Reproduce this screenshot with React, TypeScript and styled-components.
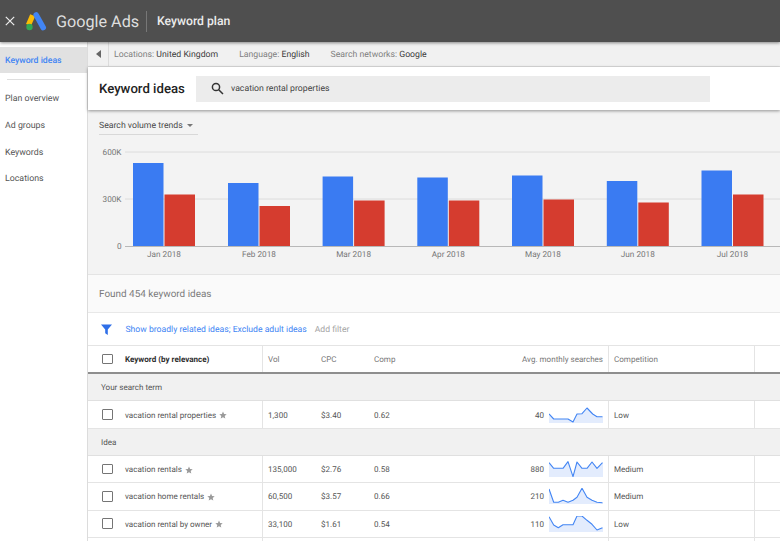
import React from "react";
import styled, { createGlobalStyle } from "styled-components";

const Global = createGlobalStyle`
  html, body { margin: 0; padding: 0; background: #fff; }
  body { font-family: Roboto, "Liberation Sans", sans-serif; overflow: hidden; text-rendering: geometricPrecision; }
  #root { width: 780px; height: 541px; overflow: hidden; }
  * { box-sizing: border-box; }
`;

const Page = styled.div`
  width: 780px;
  height: 541px;
  display: flex;
  flex-direction: column;
  overflow: hidden;
  background: #fff;
`;
const Header = styled.header`
  position: relative;
  z-index: 2;
  height: 42px;
  flex: none;
  display: flex;
  align-items: center;
  background: #4f4f4f;
  box-shadow: 0 1px 3px rgba(0, 0, 0, 0.45);
  color: #e8e8e8;
`;
const CloseButton = styled.div`
  width: 26px;
  padding-left: 5px;
  display: flex;
  align-items: center;
`;
const LogoBox = styled.div`
  width: 21px;
  margin-right: 9px;
  display: flex;
`;
const Brand = styled.div`
  font-size: 16.2px;
  color: #dedede;
  width: 90px;
`;
const HeaderDivider = styled.div`
  width: 1px;
  height: 21px;
  background: #777;
  margin-right: 10px;
`;
const PlanTitle = styled.div`
  font-size: 12.2px;
  font-weight: 500;
  color: #ececec;
`;
const Body = styled.div`
  flex: 1;
  min-height: 0;
  display: flex;
`;
const Sidebar = styled.nav`
  width: 88px;
  flex: none;
  background: #fff;
  border-right: 1px solid #dcdcdc;
  padding-top: 5px;
`;
const SideActive = styled.div`
  height: 26px;
  display: flex;
  align-items: center;
  padding: 2px 0 0 5px;
  background: #e1e1e1;
  color: #4285f4;
  font-size: 8.7px;
  font-weight: 500;
`;
const SideRule = styled.div`
  height: 1px;
  background: #dedede;
  margin: 6px 17px 5px 7px;
`;
const SideItem = styled.div`
  height: 26.7px;
  display: flex;
  align-items: center;
  padding: 2px 0 0 5px;
  color: #555;
  font-size: 8.8px;
`;
const Main = styled.main`
  flex: 1;
  min-width: 0;
  display: flex;
  flex-direction: column;
`;
const InfoBar = styled.div`
  height: 25px;
  flex: none;
  display: flex;
  align-items: center;
  background: #f1f1f1;
  border-bottom: 1px solid #dcdcdc;
  font-size: 8.7px;
`;
const Collapse = styled.div`
  width: 21px;
  height: 100%;
  margin-right: 5px;
  border-right: 1px solid #dcdcdc;
  display: flex;
  align-items: center;
  justify-content: center;
`;
const InfoItem = styled.div`
  color: #808080;
  margin-right: 21px;
  padding-top: 1px;
  white-space: nowrap;
  b {
    color: #3c3c3c;
    font-weight: 400;
  }
`;
const TitleBar = styled.div`
  position: relative;
  height: 43px;
  flex: none;
  display: flex;
  align-items: center;
  padding-left: 11px;
  background: #fff;
  box-shadow: 0 1px 3px rgba(0, 0, 0, 0.4);
`;
const PageTitle = styled.h1`
  margin: 0;
  width: 97px;
  padding-top: 1px;
  font-size: 13.2px;
  font-weight: 500;
  color: #222;
  white-space: nowrap;
`;
const SearchBox = styled.div`
  width: 514px;
  height: 26px;
  background: #ececec;
  display: flex;
  align-items: center;
  gap: 7px;
  padding-left: 15px;
  font-size: 8.7px;
  color: #444;
`;
const ChartPanel = styled.section`
  height: 165px;
  flex: none;
  background: #f3f3f3;
  padding: 6px 0 0 11px;
  border-bottom: 1px solid #e4e4e4;
`;
const TrendSelect = styled.div`
  width: 99px;
  height: 19px;
  padding-top: 1px;
  display: flex;
  align-items: center;
  gap: 4px;
  font-size: 8.7px;
  color: #4a4a4a;
  border-bottom: 1px solid #d8d8d8;
`;
const Caret = styled.span`
  width: 0;
  height: 0;
  border-left: 3.5px solid transparent;
  border-right: 3.5px solid transparent;
  border-top: 3.5px solid #777;
`;
const Chart = styled.svg`
  display: block;
  margin-left: -11px;
`;
const FoundRow = styled.div`
  height: 38px;
  flex: none;
  display: flex;
  align-items: center;
  padding: 2px 0 0 11px;
  font-size: 9.95px;
  color: #7a7a7a;
  background: #fafafa;
  border-bottom: 1px solid #e8e8e8;
`;
const FilterRow = styled.div`
  height: 33px;
  flex: none;
  display: flex;
  align-items: center;
  padding: 1px 0 0 13px;
  font-size: 8.65px;
  background: #fff;
  border-bottom: 1px solid #e4e4e4;
`;
const FilterLink = styled.span`
  color: #4285f4;
  margin: 0 8px 0 13.5px;
`;
const AddFilter = styled.span`
  color: #a5a5a5;
`;
const Row = styled.div<{ $height: number; $head?: boolean }>`
  height: ${(p) => p.$height}px;
  flex: none;
  display: grid;
  grid-template-columns: 174px 59px 53px 54px 180px 146px 26px;
  background: #fff;
  font-size: 8.05px;
  color: #555;
  border-bottom: ${(p) => (p.$head ? "2px solid #8e8e8e" : "1px solid #e4e4e4")};
`;
const Cell = styled.div<{ $line?: boolean; $right?: boolean }>`
  display: flex;
  align-items: center;
  justify-content: ${(p) => (p.$right ? "flex-end" : "flex-start")};
  padding: ${(p) => (p.$right ? "0 5px 0 0" : p.$line ? "0 0 0 5px" : "0")};
  border-left: ${(p) => (p.$line ? "1px solid #e4e4e4" : "none")};
  white-space: nowrap;
  min-width: 0;
`;
const KeywordCell = styled(Cell)`
  padding-left: 14px;
  gap: 12.5px;
`;
const HeadLabel = styled.span<{ $strong?: boolean }>`
  padding-top: 1px;
  color: ${(p) => (p.$strong ? "#2e2e2e" : "#777")};
  font-weight: ${(p) => (p.$strong ? 700 : 400)};
`;
const Value = styled.span`
  padding-top: 1px;
`;
const Box = styled.span`
  width: 10.5px;
  height: 10.5px;
  flex: none;
  border: 1.4px solid #757575;
  border-radius: 1px;
  background: #fff;
`;
const KeywordText = styled.span`
  display: inline-flex;
  align-items: center;
  gap: 3px;
  padding-top: 1px;
`;
const GroupRow = styled.div`
  height: 27px;
  flex: none;
  display: flex;
  align-items: center;
  padding: 1px 0 0 13px;
  font-size: 8.05px;
  color: #555;
  background: #f1f1f1;
  border-bottom: 1px solid #e0e0e0;
`;
const SparkWrap = styled.span`
  display: flex;
  margin-left: 5px;
`;

const Star = () => (
  <svg width="8" height="8" viewBox="0 0 24 24" fill="#9a9a9a">
    <path d="M12 1.5l3.2 7.2 7.8.8-5.9 5.2 1.8 7.8L12 18.4l-6.9 4.1 1.8-7.8L1 9.5l7.8-.8z" />
  </svg>
);

const sparkPath = (pts: number[][]) => pts.map((p) => p.join(",")).join(" ");

const Spark = ({ pts }: { pts: number[][] }) => (
  <SparkWrap>
    <svg width="54" height="16" viewBox="0 0 54 16">
      <polygon points={`0,16 ${sparkPath(pts)} 54,${pts[pts.length - 1][1]} 54,16`} fill="#e3ecfd" />
      <polyline points={sparkPath(pts)} fill="none" stroke="#4285f4" strokeWidth="1.1" strokeLinejoin="round" />
    </svg>
  </SparkWrap>
);

const months = [
  { label: "Jan 2018", x: 133, blue: 163, red: 194.5 },
  { label: "Feb 2018", x: 228, blue: 183, red: 206 },
  { label: "Mar 2018", x: 322.6, blue: 176.5, red: 200.5 },
  { label: "Apr 2018", x: 417.3, blue: 177.5, red: 200.5 },
  { label: "May 2018", x: 512, blue: 175.5, red: 199.5 },
  { label: "Jun 2018", x: 606.8, blue: 181, red: 202.5 },
  { label: "Jul 2018", x: 701.5, blue: 170.5, red: 194.5 },
];

const rows = [
  {
    kw: "vacation rentals", vol: "135,000", cpc: "$2.76", comp: "0.58", avg: "880", level: "Medium",
    pts: [[0,1.7],[4.7,7.3],[14,7.3],[19,.7],[24,15.7],[28,1],[33,7.3],[38,7.3],[43,1],[48,7.3],[53.5,1.7]],
  },
  {
    kw: "vacation home rentals", vol: "60,500", cpc: "$3.57", comp: "0.66", avg: "210", level: "Medium",
    pts: [[0,1],[4.7,14.3],[9.3,14.3],[14,12.3],[19,14.3],[24,12.3],[28,9.3],[33,.3],[38,9.3],[43,12.3],[48,14.3],[53.5,14.7]],
  },
  {
    kw: "vacation rental by owner", vol: "33,100", cpc: "$1.61", comp: "0.54", avg: "110", level: "Low",
    pts: [[0,.7],[4.7,9],[9.3,11.7],[14,8.7],[24,8.7],[28,0],[33,0],[38,4.3],[43,8.3],[48,14],[53.5,11.7]],
  },
];

const termPts = [[0,7],[4.7,12],[19,12],[24,15],[28,7],[33,6.7],[38,1],[43.7,7],[48,9.7],[53.5,9.7]];

export default function App() {
  return (
    <Page>
      <Global />
      <Header>
        <CloseButton>
          <svg width="10" height="10" viewBox="0 0 10 10" stroke="#eee" strokeWidth="1.2">
            <path d="M.8.8l8.4 8.4M9.2.8L.8 9.2" />
          </svg>
        </CloseButton>
        <LogoBox>
          <svg width="21" height="19" viewBox="0 0 21 19">
            <path d="M6.7 3.2L2.5 13" stroke="#fbbc04" strokeWidth="5.4" strokeLinecap="butt" />
            <path d="M10.2 3l7 12.6" stroke="#4285f4" strokeWidth="5.6" strokeLinecap="round" />
            <circle cx="3.5" cy="15" r="3.2" fill="#34a853" />
          </svg>
        </LogoBox>
        <Brand>Google Ads</Brand>
        <HeaderDivider />
        <PlanTitle>Keyword plan</PlanTitle>
      </Header>
      <Body>
        <Sidebar>
          <SideActive>Keyword ideas</SideActive>
          <SideRule />
          <SideItem>Plan overview</SideItem>
          <SideItem>Ad groups</SideItem>
          <SideItem>Keywords</SideItem>
          <SideItem>Locations</SideItem>
        </Sidebar>
        <Main>
          <InfoBar>
            <Collapse>
              <svg width="5" height="8" viewBox="0 0 5 8"><path d="M5 0v8L0 4z" fill="#666" /></svg>
            </Collapse>
            <InfoItem>Locations: <b>United Kingdom</b></InfoItem>
            <InfoItem>Language: <b>English</b></InfoItem>
            <InfoItem>Search networks: <b>Google</b></InfoItem>
          </InfoBar>
          <TitleBar>
            <PageTitle>Keyword ideas</PageTitle>
            <SearchBox>
              <svg width="13" height="13" viewBox="0 0 13 13" fill="none" stroke="#333" strokeWidth="1.5">
                <circle cx="5" cy="5" r="3.6" />
                <path d="M7.7 7.7L12 12" />
              </svg>
              <Value>vacation rental properties</Value>
            </SearchBox>
          </TitleBar>
          <ChartPanel>
            <TrendSelect>Search volume trends<Caret /></TrendSelect>
            <Chart width="692" height="129" viewBox="88 135 692 129">
              {[152, 199].map((y) => (
                <line key={y} x1="125" x2="780" y1={y} y2={y} stroke="#dcdcdc" strokeWidth="1" />
              ))}
              {months.map((m) => (
                <g key={m.label}>
                  <rect x={m.x} y={m.blue} width="30.5" height={246 - m.blue} fill="#3a7bf2" />
                  <rect x={m.x + 31.5} y={m.red} width="30.5" height={246 - m.red} fill="#d53c2f" />
                  <text x={m.x + 31} y="257" textAnchor="middle" fontSize="8.2" fill="#777" fontFamily="Roboto, sans-serif">{m.label}</text>
                </g>
              ))}
              <line x1="125" x2="780" y1="246.5" y2="246.5" stroke="#b8b8b8" strokeWidth="1" />
              <text x="121.5" y="155" textAnchor="end" fontSize="8.2" fill="#777" fontFamily="Roboto, sans-serif">600K</text>
              <text x="121.5" y="202" textAnchor="end" fontSize="8.2" fill="#777" fontFamily="Roboto, sans-serif">300K</text>
              <text x="121.5" y="249" textAnchor="end" fontSize="8.2" fill="#777" fontFamily="Roboto, sans-serif">0</text>
            </Chart>
          </ChartPanel>
          <FoundRow>Found 454 keyword ideas</FoundRow>
          <FilterRow>
            <svg width="11" height="11" viewBox="0 0 11 11"><path d="M0 .5h11L6.8 5.6V11L4.2 9.2V5.6z" fill="#2f6fe8" /></svg>
            <FilterLink>Show broadly related ideas; Exclude adult ideas</FilterLink>
            <AddFilter>Add filter</AddFilter>
          </FilterRow>
          <Row $height={28} $head>
            <KeywordCell><Box /><HeadLabel $strong>Keyword (by relevance)</HeadLabel></KeywordCell>
            <Cell $line><HeadLabel>Vol</HeadLabel></Cell>
            <Cell><HeadLabel>CPC</HeadLabel></Cell>
            <Cell><HeadLabel>Comp</HeadLabel></Cell>
            <Cell $right><HeadLabel>Avg. monthly searches</HeadLabel></Cell>
            <Cell $line><HeadLabel>Competition</HeadLabel></Cell>
            <Cell $line />
          </Row>
          <GroupRow>Your search term</GroupRow>
          <Row $height={28}>
            <KeywordCell><Box /><KeywordText>vacation rental properties<Star /></KeywordText></KeywordCell>
            <Cell $line><Value>1,300</Value></Cell>
            <Cell><Value>$3.40</Value></Cell>
            <Cell><Value>0.62</Value></Cell>
            <Cell $right><Value>40</Value><Spark pts={termPts} /></Cell>
            <Cell $line><Value>Low</Value></Cell>
            <Cell $line />
          </Row>
          <GroupRow>Idea</GroupRow>
          {rows.map((r) => (
            <Row $height={27.3} key={r.kw}>
              <KeywordCell><Box /><KeywordText>{r.kw}<Star /></KeywordText></KeywordCell>
              <Cell $line><Value>{r.vol}</Value></Cell>
              <Cell><Value>{r.cpc}</Value></Cell>
              <Cell><Value>{r.comp}</Value></Cell>
              <Cell $right><Value>{r.avg}</Value><Spark pts={r.pts} /></Cell>
              <Cell $line><Value>{r.level}</Value></Cell>
              <Cell $line />
            </Row>
          ))}
          <Row $height={27.3}>
            <KeywordCell />
            <Cell $line />
            <Cell />
            <Cell />
            <Cell />
            <Cell $line />
            <Cell $line />
          </Row>
        </Main>
      </Body>
    </Page>
  );
}
